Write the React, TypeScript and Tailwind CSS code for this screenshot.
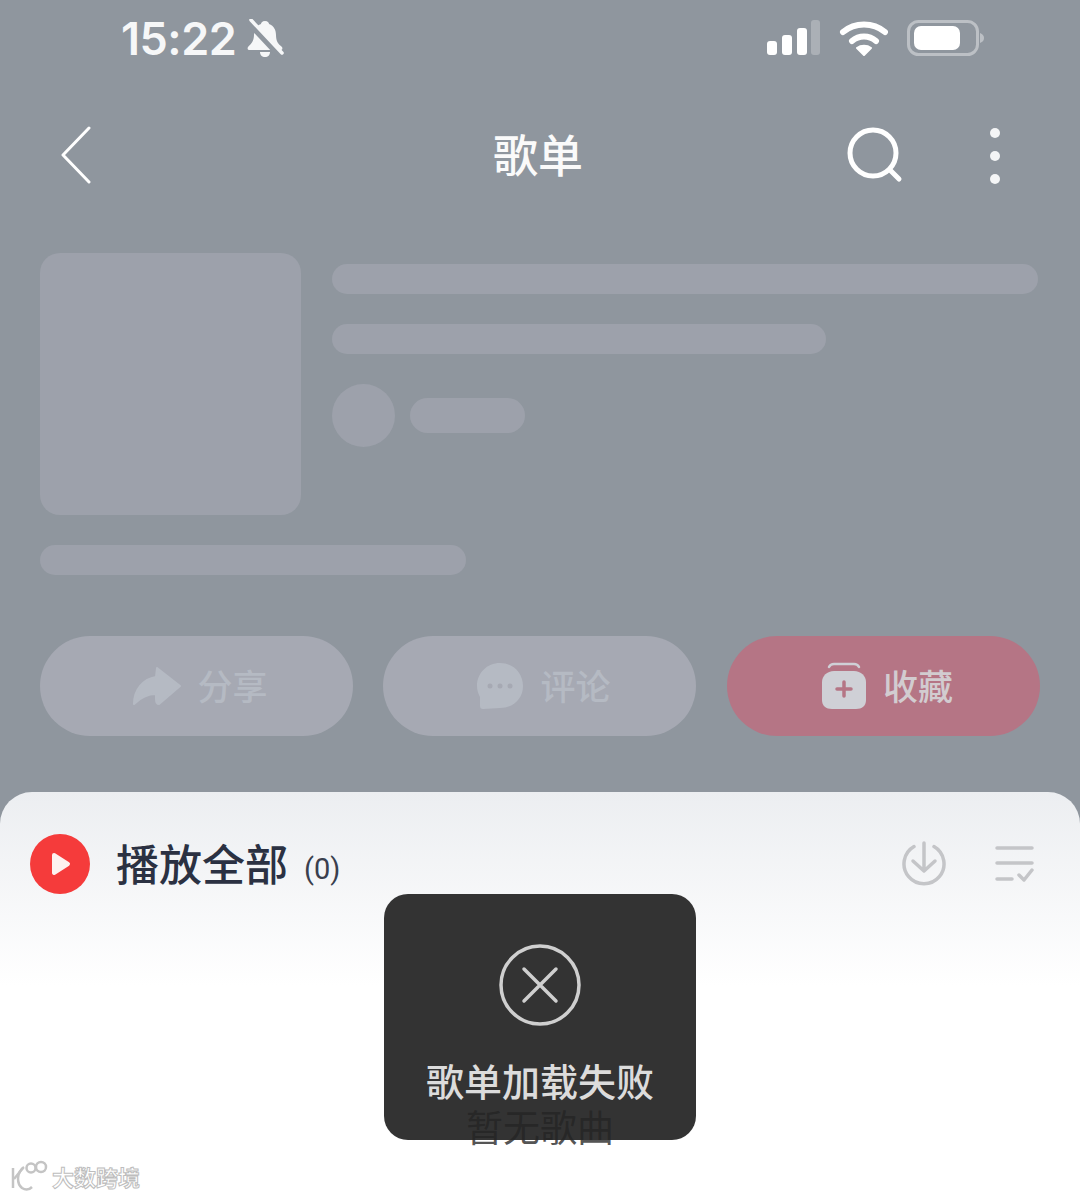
import { ReactNode } from 'react';

function StatusBar() {
  return (
    <div className="flex h-[76px] items-center justify-between pl-[121px] pr-[95px] text-white">
      <div className="flex items-center gap-[10px]">
        <span className="font-['Inter',sans-serif] text-[45px] leading-none font-semibold tracking-[-0.5px] text-[#f6f7f8]">15:22</span>
        <svg width="38" height="38" viewBox="0 0 38 38" fill="none">
          <path d="M19 2c3 0 4 2 4 3 5 2 7 6 7 11 0 6 2 9 6 12 1 2 0 3-2 3H4c-2 0-3-1-2-3 3-3 6-6 6-12 0-5 2-9 7-11 0-1 1-3 4-3z" fill="#f6f7f8" />
          <path d="M14 33h10c0 3-2 5-5 5s-5-2-5-5z" fill="#f6f7f8" />
          <path d="M2 3l31 33" stroke="#8f969e" strokeWidth="6" />
          <path d="M5 1l31 33" stroke="#f6f7f8" strokeWidth="3.500" strokeLinecap="round" />
        </svg>
      </div>
      <div className="flex items-center gap-[19px]">
        <svg width="54" height="36" viewBox="0 0 54 36">
          <rect x="1" y="21" width="10" height="14" rx="3" fill="#fff" />
          <rect x="16" y="15" width="10" height="20" rx="3" fill="#fff" />
          <rect x="31" y="8" width="10" height="27" rx="3" fill="#fff" />
          <rect x="45" y="0" width="9" height="35" rx="3" fill="#fff" fillOpacity="0.25" />
        </svg>
        <svg width="49" height="36" viewBox="0 0 49 36" fill="none">
          <path d="M4 12c12-10 30-10 42 0" stroke="#fff" strokeWidth="6" strokeLinecap="round" />
          <path d="M13 21c7-6 17-6 24 0" stroke="#fff" strokeWidth="6" strokeLinecap="round" />
          <path d="M25 35l-7-7c4-3 10-3 14 0z" fill="#fff" stroke="#fff" strokeWidth="2" strokeLinejoin="round" />
        </svg>
        <svg width="78" height="36" viewBox="0 0 78 36" fill="none">
          <rect x="1.500" y="1.500" width="69" height="33" rx="10" stroke="#fff" strokeOpacity="0.4" strokeWidth="3" />
          <rect x="7" y="6" width="46" height="24" rx="7" fill="#fff" />
          <path d="M73 13c3 1 4 3 4 5s-1 4-4 5z" fill="#fff" fillOpacity="0.4" />
        </svg>
      </div>
    </div>
  );
}

function NavBar() {
  return (
    <div className="flex h-[158px] items-center justify-between pl-[60px] pr-[80px]">
      <svg width="32" height="58" viewBox="0 0 32 58" fill="none">
        <path d="M29 2L3 29l26 27" stroke="#fff" strokeWidth="3" strokeLinecap="round" strokeLinejoin="round" />
      </svg>
      <span className="mb-[4px] ml-[401px] text-[45px] leading-none font-medium text-[#fafafa]">歌单</span>
      <div className="ml-auto flex items-center gap-[87px]">
        <svg width="56" height="56" viewBox="0 0 56 56" fill="none">
          <circle cx="26" cy="26" r="23" stroke="#fff" strokeWidth="5" />
          <path d="M43 43l9 9" stroke="#fff" strokeWidth="5" strokeLinecap="round" />
        </svg>
        <div className="mt-[2px] flex flex-col gap-[13px]">
          <div className="size-[10px] rounded-full bg-[#f4f5f6]" />
          <div className="size-[10px] rounded-full bg-[#f4f5f6]" />
          <div className="size-[10px] rounded-full bg-[#f4f5f6]" />
        </div>
      </div>
    </div>
  );
}

function Skeleton() {
  return (
    <div className="mt-[19px] px-10">
      <div className="flex gap-[31px]">
        <div className="h-[262px] w-[261px] rounded-[20px] bg-[#9da1ab]" />
        <div className="flex flex-1 flex-col pt-[11px] pr-[2px]">
          <div className="h-[30px] rounded-full bg-[#9da1ab]" />
          <div className="mt-[30px] h-[30px] w-[494px] rounded-full bg-[#9da1ab]" />
          <div className="mt-[30px] flex items-center gap-[15px]">
            <div className="size-[63px] rounded-full bg-[#9da1ab]" />
            <div className="h-[35px] w-[115px] rounded-full bg-[#9da1ab]" />
          </div>
        </div>
      </div>
      <div className="mt-[30px] h-[30px] w-[426px] rounded-full bg-[#9da1ab]" />
    </div>
  );
}

function ActionButton({ icon, label, pink }: { icon: ReactNode; label: string; pink?: boolean }) {
  return (
    <div className={`flex h-[100px] w-[313px] items-center justify-center gap-[16px] rounded-full pl-[5px] ${pink ? 'ml-[1px] bg-[#b57585]' : 'bg-[#a6a9b3]'}`}>
      {icon}
      <span className={`mb-[3px] text-[35px] leading-none font-medium ${pink ? 'text-[#d2ccd0]' : 'text-[#b5bac3]'}`}>{label}</span>
    </div>
  );
}

function SheetHeader() {
  return (
    <div className="flex items-center pl-[30px] pr-[46px]">
      <div className="flex size-[60px] items-center justify-center rounded-full bg-[#f53b3b]">
        <svg width="24" height="28" viewBox="0 0 24 28" className="ml-[2px]">
          <path d="M5 5l14 9L5 23z" fill="#fdf2f0" stroke="#fdf2f0" strokeWidth="4" strokeLinejoin="round" />
        </svg>
      </div>
      <span className="mb-[4px] ml-[26px] text-[43px] leading-none font-medium text-[#2b3142]">播放全部</span>
      <span className="mt-[10px] ml-[16px] font-['Roboto',sans-serif] text-[29px] leading-none text-[#3a3f4e]">(0)</span>
      <svg width="46" height="46" viewBox="0 0 46 46" fill="none" className="ml-auto" stroke="#c4c5c8" strokeWidth="3.500" strokeLinecap="round" strokeLinejoin="round">
        <path d="M13 5.500a20 20 0 1 0 20 0" />
        <path d="M23 2v27M12 20l11 10 11-10" />
      </svg>
      <svg width="40" height="36" viewBox="0 0 40 36" fill="none" className="ml-[47px]" stroke="#c4c5c8" strokeWidth="3.500" strokeLinecap="round" strokeLinejoin="round">
        <path d="M3 2h35M3 17h35M3 33h15M25 29l5 5 8-10" />
      </svg>
    </div>
  );
}

function Toast() {
  return (
    <div className="absolute left-[384px] top-[102px] flex h-[246px] w-[312px] flex-col items-center rounded-[24px] bg-[#242424]/93 pt-[50px]">
      <svg width="82" height="82" viewBox="0 0 82 82" fill="none" stroke="#cfcfcf" strokeWidth="3.500" strokeLinecap="round">
        <circle cx="41" cy="41" r="39" />
        <path d="M25 25l32 32M57 25L25 57" />
      </svg>
      <span className="mt-[31px] text-[38px] leading-[46px] font-medium text-[#dcdcdc]">歌单加载失败</span>
    </div>
  );
}

function Watermark() {
  return (
    <div className="absolute bottom-[4px] left-[10px] flex items-center gap-[4px]">
      <svg width="38" height="32" viewBox="0 0 38 32" fill="none" stroke="#c4c4c4" strokeWidth="2.500">
        <path d="M3 8v20" />
        <path d="M14 7C7 12 6 23 12 28c3 2 7 2 10-1" />
        <path d="M4 19l9-11" />
        <circle cx="21" cy="8" r="4.500" />
        <circle cx="31" cy="7" r="5" />
      </svg>
      <span className="text-[22px] leading-none font-bold text-white [-webkit-text-stroke:1px_#bdbdbd]">大数跨境</span>
    </div>
  );
}

export default function App() {
  return (
    <div className="relative flex h-[1196px] w-[1080px] flex-col overflow-hidden bg-[#8f969e] font-['Noto_Sans_CJK_SC',sans-serif]">
      <StatusBar />
      <NavBar />
      <Skeleton />

      <div className="mt-[61px] flex gap-[30px] px-10">
        <ActionButton
          label="分享"
          icon={
            <svg width="48" height="40" viewBox="0 0 48 40" fill="#b5bac3" stroke="#b5bac3" strokeWidth="2" strokeLinejoin="round" className="ml-[3px]">
              <path d="M24 2l23 18-21 18c-2 0-3-2-3-5v-5C13 28 7 32 1 38 1 24 10 13 23 11z" />
            </svg>
          }
        />
        <ActionButton
          label="评论"
          icon={
            <svg width="48" height="48" viewBox="0 0 48 48" className="ml-[3px]">
              <path d="M24 1c13 0 23 10 23 23S37 46 24 46L7 47c-2 0-3-1-3-3v-9C2 31 1 28 1 24 1 11 11 1 24 1z" fill="#b5bac3" />
              <circle cx="14" cy="24" r="2.500" fill="#a6a9b3" />
              <circle cx="24" cy="24" r="2.500" fill="#a6a9b3" />
              <circle cx="34" cy="24" r="2.500" fill="#a6a9b3" />
            </svg>
          }
        />
        <ActionButton
          pink
          label="收藏"
          icon={
            <svg width="46" height="48" viewBox="0 0 46 48" fill="none" className="ml-[2px]">
              <path d="M8 5c1-2 3-3 5-3h20c2 0 4 1 5 3" stroke="#cfd0d6" strokeWidth="2.500" strokeLinecap="round" />
              <path d="M13 9h20c7 0 12 5 12 11v18c0 6-4 9-10 9H11C5 47 1 44 1 38V20C1 14 6 9 13 9z" fill="#cfd0d6" />
              <path d="M23 20v14M16 27h14" stroke="#b57585" strokeWidth="3.500" strokeLinecap="round" />
            </svg>
          }
        />
      </div>

      <div className="relative mt-[56px] flex-1 rounded-t-[32px] bg-linear-to-b from-[#eceef1] to-white to-[48%] pt-[42px]">
        <SheetHeader />
        <div className="mt-[210px] text-center text-[37px] leading-[44px] text-[#555]">暂无歌曲</div>
        <Toast />
      </div>

      <Watermark />
    </div>
  );
}
